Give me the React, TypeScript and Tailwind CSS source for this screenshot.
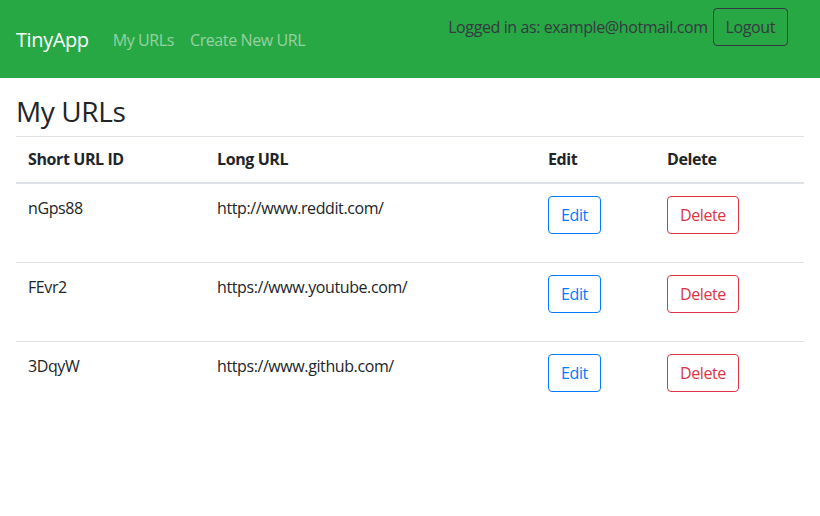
import React from "react";

const rows = [
  { id: "nGps88", url: "http://www.reddit.com/" },
  { id: "FEvr2", url: "https://www.youtube.com/" },
  { id: "3DqyW", url: "https://www.github.com/" },
];

export default function App() {
  return (
    <div className="min-h-[516px] bg-white text-[#212529] text-[16px] leading-[24px] tracking-[-0.4px]" style={{ fontFamily: '"Open Sans", "Noto Sans", sans-serif' }}>
      <nav className="h-[78px] bg-[#28a745] flex justify-between pl-4 pr-8">
        <div className="flex items-center h-[80px]">
          <span className="text-white text-[20px] leading-[30px] mr-4">TinyApp</span>
          <span className="text-white/50 px-2">My URLs</span>
          <span className="text-white/50 px-2">Create New URL</span>
        </div>
        <div className="flex items-start pt-2">
          <span className="mt-[7px] text-[#343a40] mr-[5px]">Logged in as: example@hotmail.com</span>
          <button className="h-[38px] px-3 border border-[#343a40] rounded text-[#343a40]">Logout</button>
        </div>
      </nav>
      <div className="px-4">
        <h3 className="text-[28px] leading-[34px] font-medium pt-[16px] pb-[8px]">My URLs</h3>
        <table className="w-full border-collapse">
          <thead>
            <tr className="border-t border-[#dee2e6] border-b-2">
              <th className="text-left font-bold px-3 py-0 w-[189px] h-[46px]">Short URL ID</th>
              <th className="text-left font-bold px-3 w-[331px]">Long URL</th>
              <th className="text-left font-bold px-3 w-[119px]">Edit</th>
              <th className="text-left font-bold px-3">Delete</th>
            </tr>
          </thead>
          <tbody>
            {rows.map((r, i) => (
              <tr key={r.id} className={i > 0 ? "border-t border-[#dee2e6] align-top" : "align-top"}>
                <td className={i === 0 ? "p-3 h-[80px]" : "p-3 h-[79px]"}>{r.id}</td>
                <td className="p-3">{r.url}</td>
                <td className="p-3">
                  <button className="h-[38px] px-3 border border-[#007bff] text-[#007bff] rounded">Edit</button>
                </td>
                <td className="p-3">
                  <button className="h-[38px] px-3 border border-[#dc3545] text-[#dc3545] rounded">Delete</button>
                </td>
              </tr>
            ))}
          </tbody>
        </table>
      </div>
    </div>
  );
}
